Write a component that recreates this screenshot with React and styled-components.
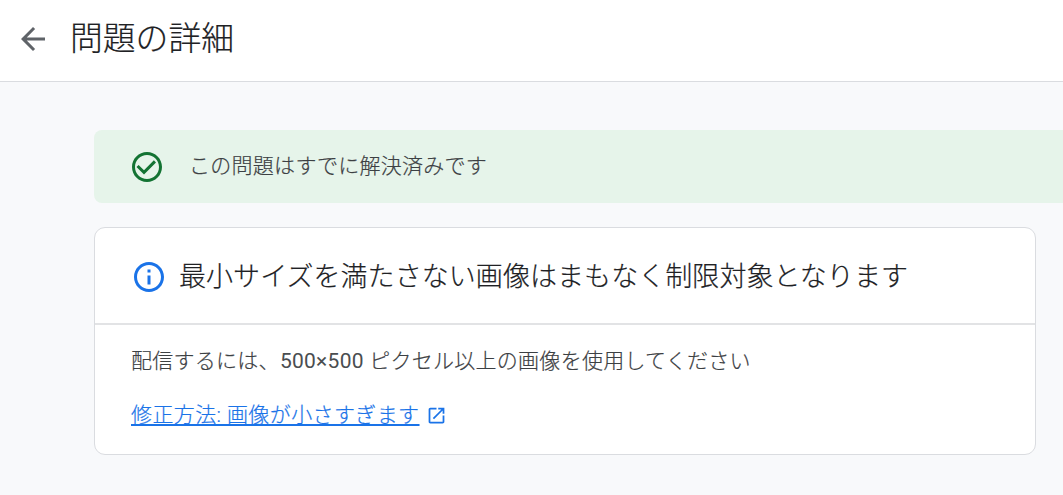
import React from "react";
import styled, { createGlobalStyle } from "styled-components";

const Global = createGlobalStyle`
  *{box-sizing:border-box}
  body{margin:0;background:#f8f9fb;font-family:Roboto,"Noto Sans CJK JP",sans-serif;font-weight:300;color:#3c4043;-webkit-text-stroke:0.2px currentColor}
`;
const Page = styled.div`height:495px;overflow:hidden;background:#f8f9fb;`;
const Header = styled.header`
  height:82px;display:flex;align-items:center;padding:0 0 3px 15px;gap:19px;
  background:#fff;border-bottom:1px solid #dadce0;
`;
const Title = styled.h1`margin:0;font-size:32.8px;line-height:40px;font-weight:300;color:#202124;white-space:nowrap;`;
const Main = styled.main`padding:48px 0 0 94px;`;
const Banner = styled.div`
  height:73px;display:flex;align-items:center;padding-left:35px;gap:24px;
  background:#e6f4ea;border-radius:8px 0 0 8px;font-size:21px;letter-spacing:0.28px;
`;
const BannerText = styled.span`line-height:32px;padding-bottom:1px;`;
const Card = styled.section`
  width:942px;height:228px;margin-top:24px;background:#fff;
  border:1px solid #dadce0;border-radius:11px;
`;
const CardHeader = styled.div`
  height:97px;display:flex;align-items:center;padding:2px 0 0 36px;gap:12px;
  border-bottom:2px solid #e2e3e5;font-size:27px;letter-spacing:0.06px;color:#202124;white-space:nowrap;
`;
const CardTitle = styled.span`line-height:40px;`;
const CardBody = styled.div`padding:20px 36px;font-size:21px;line-height:32px;letter-spacing:0.27px;white-space:nowrap;`;
const Text = styled.p`margin:0 0 22px;`;
const Dimensions = styled.span`font-weight:400;color:#4a4d50;-webkit-text-stroke:0 transparent;`;
const LinkRow = styled.div`display:flex;align-items:center;gap:6px;color:#1a73e8;`;
const Link = styled.a`
  color:#1a73e8;letter-spacing:0.4px;text-decoration:underline;
  text-decoration-thickness:1.5px;text-underline-offset:2px;
`;
const Icon = styled.svg`display:block;flex:none;fill:${p => p.$color};width:${p => p.$size}px;height:${p => p.$size}px;`;

export default function App() {
  return (
    <Page>
      <Global />
      <Header>
        <Icon $size={36} $color="#5f6368" viewBox="0 0 24 24"><path d="M20 11H7.83l5.59-5.59L12 4l-8 8 8 8 1.41-1.41L7.83 13H20v-2z" /></Icon>
        <Title>問題の詳細</Title>
      </Header>
      <Main>
        <Banner>
          <Icon $size={36} $color="#137333" viewBox="0 0 24 24"><path d="M16.59 7.58 10 14.17l-3.59-3.58L5 12l5 5 8-8-1.41-1.42zM12 2C6.48 2 2 6.48 2 12s4.48 10 10 10 10-4.48 10-10S17.52 2 12 2zm0 18c-4.42 0-8-3.58-8-8s3.58-8 8-8 8 3.58 8 8-3.58 8-8 8z" /></Icon>
          <BannerText>この問題はすでに解決済みです</BannerText>
        </Banner>
        <Card>
          <CardHeader>
            <Icon $size={36} $color="#1a73e8" viewBox="0 0 24 24"><path d="M11 7h2v2h-2V7zm0 4h2v6h-2v-6zm1-9C6.48 2 2 6.48 2 12s4.48 10 10 10 10-4.48 10-10S17.52 2 12 2zm0 18c-4.41 0-8-3.59-8-8s3.59-8 8-8 8 3.59 8 8-3.59 8-8 8z" /></Icon>
            <CardTitle>最小サイズを満たさない画像はまもなく制限対象となります</CardTitle>
          </CardHeader>
          <CardBody>
            <Text>配信するには、<Dimensions>500×500</Dimensions> ピクセル以上の画像を使用してください</Text>
            <LinkRow>
              <Link>修正方法: 画像が小さすぎます</Link>
              <Icon $size={21} $color="#1a73e8" viewBox="0 0 24 24"><path d="M19 19H5V5h7V3H5c-1.11 0-2 .9-2 2v14c0 1.1.89 2 2 2h14c1.1 0 2-.9 2-2v-7h-2v7zM14 3v2h3.59l-9.83 9.83 1.41 1.41L19 6.41V10h2V3h-7z" /></Icon>
            </LinkRow>
          </CardBody>
        </Card>
      </Main>
    </Page>
  );
}
